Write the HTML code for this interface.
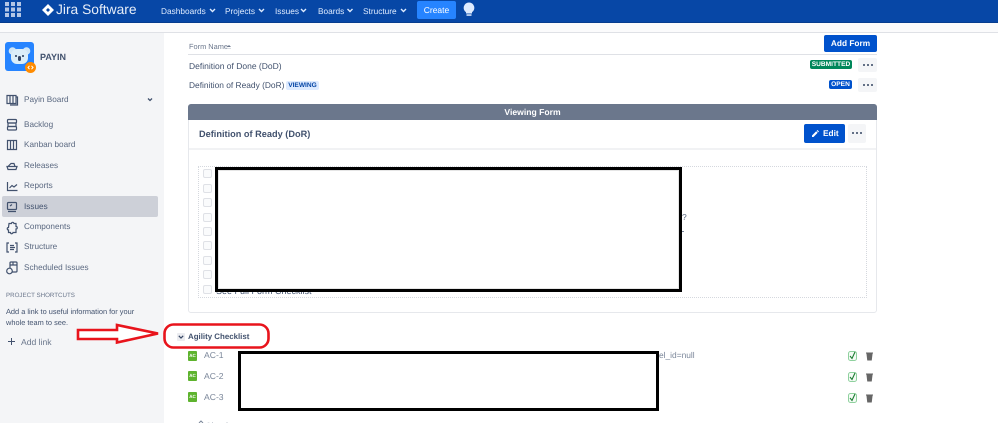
<!DOCTYPE html>
<html><head><meta charset="utf-8"><style>
html,body{margin:0;padding:0;background:#fff}
#p{position:relative;width:998px;height:423px;overflow:hidden;background:#fff;font-family:"Liberation Sans",sans-serif;color:#42526e;text-rendering:geometricPrecision;filter:blur(.3px)}
#p div,#p span.a{position:absolute;white-space:nowrap}
.t{line-height:12px;height:12px}
.n{font-size:8.300px;color:#deebff;top:5px}
.s{font-size:8.200px;color:#5a6880;left:24px}
.lz{font-weight:bold;font-size:6.600px;text-align:center;border-radius:2px;color:#fff;line-height:9px;height:9px}
.dt{background:#f4f5f7;border-radius:2px;color:#253858;text-align:center;font-weight:bold}
.d{display:inline-block;width:2px;height:2px;border-radius:50%;background:#344563;margin:0 1px;vertical-align:middle}
.cb{left:203px;width:7px;height:7px;border:1px solid #dfe1e6;border-radius:2px;background:#fafbfc}
.ac{left:188px;width:9px;height:10px;background:#5eb32e;border-radius:1px;color:#fff;font-size:4.500px;font-weight:bold;text-align:center;line-height:10px}
.act{left:204px;font-size:8.600px;color:#7a8699}
svg{position:absolute;overflow:visible}
</style></head><body><div id="p">
<div style="left:0;top:0;width:998px;height:22px;background:#0747a6"></div>
<div style="left:0;top:22px;width:998px;height:1px;background:#063d8f"></div>
<div style="left:0;top:23px;width:998px;height:9px;background:#fbfbfc"></div>
<div style="left:0;top:32px;width:998px;height:1px;background:#dfe1e6"></div>
<div style="left:0;top:33px;width:164px;height:390px;background:#f4f5f7"></div>

<svg style="left:5px;top:2px" width="16" height="15" fill="#b3c6e6"><rect width="4" height="4"/><rect x="6" width="4" height="4"/><rect x="12" width="4" height="4"/><rect y="5.500" width="4" height="4"/><rect x="6" y="5.500" width="4" height="4"/><rect x="12" y="5.500" width="4" height="4"/><rect y="11" width="4" height="4"/><rect x="6" y="11" width="4" height="4"/><rect x="12" y="11" width="4" height="4"/></svg>
<svg style="left:42px;top:4px" width="12" height="12"><path d="M6 0L12 6L6 12L0 6Z" fill="#fff"/><path d="M6 4L8 6L6 8L4 6Z" fill="#0747a6"/></svg>
<div class="t" style="left:56px;top:2px;height:16px;line-height:16px;font-size:13.800px;color:#e6edf8">Jira Software</div>
<div class="t n" style="left:161px">Dashboards</div>
<div class="t n" style="left:225px">Projects</div>
<div class="t n" style="left:275px">Issues</div>
<div class="t n" style="left:318px">Boards</div>
<div class="t n" style="left:363px">Structure</div>
<svg style="left:0;top:0" width="420" height="22" fill="none" stroke="#deebff" stroke-width="1.400"><path d="M210 9l2.500 2.500L215 9M259 9l2.500 2.500L264 9M301 9l2.500 2.500L306 9M347.500 9l2.500 2.500L352.500 9M401 9l2.500 2.500L406 9"/></svg>
<div style="left:417px;top:1px;width:39px;height:18px;background:#2684ff;border-radius:2px;color:#fff;font-size:8.500px;text-align:center;line-height:19px">Create</div>
<svg style="left:463px;top:2px" width="12" height="15"><path d="M6 0.500a5.300 5.300 0 0 1 3 9.700V11.500H3V10.200A5.300 5.300 0 0 1 6 .5Z" fill="#deebff"/><rect x="3.500" y="12.300" width="5" height="1.500" fill="#deebff"/></svg>

<div style="left:5px;top:42px;width:29px;height:29px;background:#2684ff;border-radius:3px"></div>
<svg style="left:8px;top:46px" width="24" height="21"><circle cx="4.500" cy="5" r="3.800" fill="#cfe6f7"/><circle cx="18.500" cy="5" r="3.800" fill="#cfe6f7"/><rect x="3" y="3" width="17" height="15" rx="6" fill="#dceef9"/><circle cx="8" cy="10" r="1" fill="#253858"/><circle cx="15" cy="10" r="1" fill="#253858"/><rect x="10" y="10" width="3" height="5" rx="1.500" fill="#344563"/></svg>
<div style="left:25px;top:62px;width:11px;height:11px;background:#ff8b00;border-radius:50%"></div>
<svg style="left:25px;top:62px" width="11" height="11" fill="none" stroke="#fff" stroke-width="1"><path d="M4.500 3.800L3 5.500l1.500 1.700M6.500 3.800L8 5.500 6.500 7.200"/></svg>
<div class="t" style="left:40px;top:51px;font-size:9px;font-weight:bold;color:#42526e">PAYIN</div>

<div style="left:2px;top:196px;width:156px;height:20.500px;background:#cdd0d8;border-radius:2px"></div>
<div class="t s" style="top:94px">Payin Board</div>
<div class="t s" style="top:119px">Backlog</div>
<div class="t s" style="top:139px">Kanban board</div>
<div class="t s" style="top:160px">Releases</div>
<div class="t s" style="top:180px">Reports</div>
<div class="t s" style="top:201px;color:#42526e">Issues</div>
<div class="t s" style="top:221px">Components</div>
<div class="t s" style="top:241px">Structure</div>
<div class="t s" style="top:262px">Scheduled Issues</div>
<svg style="left:0;top:90px" width="164" height="190" fill="none" stroke="#42526e" stroke-width="1.200">
<path d="M7 5.500h9v8H7zM10 5.500v8M13 5.500v8M16 7h1.500v8H10"/>
<path d="M148 8.500l2 2 2-2" stroke-width="1.300"/>
<rect x="7.500" y="29.500" width="9" height="3.500" rx="1"/><rect x="8" y="33" width="8" height="3.500"/><rect x="7.500" y="36.500" width="9" height="3.500" rx="1"/>
<path d="M7.500 50.500h9v9h-9zM10.500 50.500v9M13.500 50.500v9"/>
<path d="M8 76.500l3-3h3l1 3M7 76.500h10l-1 3H8z"/>
<path d="M7.500 92v8.500h10M9.500 98l2.500-2.500 2 1.500 3-2.500"/>
<rect x="7.500" y="112.500" width="9" height="7" rx="1"/><path d="M8 121.500h8M10 116l2-1.500" />
<path d="M9 133h2.500a1.200 1.200 0 0 1 2.400 0H16v3a1.200 1.200 0 0 1 0 2.500V142h-3a1.200 1.200 0 0 1-2.500 0H8.500v-2.500a1.200 1.200 0 0 1 0-2.500z" transform="translate(0,.5)"/>
<path d="M9 153H7v9h2M15 153h2v9h-2M10 155.500h4M10 157.500h5M10 159.500h4"/>
<rect x="10" y="172" width="7" height="10" rx="1"/><path d="M10.500 175h6M13 172v3"/><circle cx="9.500" cy="181" r="2.800" fill="#f4f5f7"/>
</svg>

<div class="t" style="left:6px;top:290px;font-size:6.200px;color:#6b778c">PROJECT SHORTCUTS</div>
<div class="t" style="left:6px;top:306px;font-size:7.400px;color:#42526e">Add a link to useful information for your</div>
<div class="t" style="left:6px;top:317px;font-size:7.400px;color:#42526e">whole team to see.</div>
<svg style="left:7px;top:337px" width="9" height="9" stroke="#42526e" stroke-width="1"><path d="M4.500 1v7M1 4.500h7"/></svg>
<div class="t" style="left:21px;top:336px;font-size:8.600px;color:#6b778c">Add link</div>

<div class="t" style="left:189px;top:41px;font-size:7.400px;color:#6b778c">Form Name</div>
<svg style="left:227px;top:45px" width="4" height="4" fill="#6b778c"><path d="M0 2L2 0 4 2z"/><path d="M0 3h4v.6H0z" fill="#c1c7d0"/></svg>
<div style="left:188px;top:54px;width:689px;height:1px;background:#dfe1e6"></div>
<div class="t" style="left:189px;top:60px;font-size:8.500px;color:#42526e">Definition of Done (DoD)</div>
<div class="t" style="left:189px;top:79px;font-size:8.400px;color:#42526e">Definition of Ready (DoR)</div>
<div class="lz" style="left:286px;top:81px;width:33px;background:#deebff;color:#0747a6">VIEWING</div>
<div style="left:824px;top:35px;width:53px;height:17px;background:#0052cc;border-radius:2px;color:#fff;font-size:8.300px;font-weight:bold;text-align:center;line-height:17px">Add Form</div>
<div class="lz" style="left:810px;top:60px;width:42px;background:#00875a">SUBMITTED</div>
<div class="dt" style="left:858px;top:58px;width:19px;height:14px;line-height:13px"><i class="d"></i><i class="d"></i><i class="d"></i></div>
<div class="lz" style="left:829px;top:80px;width:23px;background:#0052cc">OPEN</div>
<div class="dt" style="left:858px;top:78px;width:19px;height:14px;line-height:13px"><i class="d"></i><i class="d"></i><i class="d"></i></div>

<div style="left:188px;top:104px;width:689px;height:209px;box-sizing:border-box;border:1px solid #e6e8ec;border-radius:3px"></div>
<div style="left:188px;top:104px;width:689px;height:15.500px;background:#6b778c;border-radius:3px 3px 0 0;color:#fff;font-size:8.600px;font-weight:bold;text-align:center;line-height:16px">Viewing Form</div>
<div class="t" style="left:199px;top:127.500px;font-size:9.200px;font-weight:bold;color:#42526e">Definition of Ready (DoR)</div>
<div style="left:189px;top:148px;width:687px;height:2px;background:#f1f2f4"></div>
<div style="left:804px;top:124px;width:41px;height:19px;background:#0052cc;border-radius:2px;color:#fff;font-size:8.300px;font-weight:bold;line-height:19px;text-indent:19px">Edit</div>
<svg style="left:812px;top:130px" width="7" height="7" fill="#fff"><path d="M0 7V5.500L4.200 1.300l1.500 1.500L1.500 7zM4.700.8L5.500 0 7 1.500l-.8.8z"/></svg>
<div class="dt" style="left:848px;top:124px;width:18px;height:19px;line-height:18px"><i class="d"></i><i class="d"></i><i class="d"></i></div>
<div style="left:198px;top:166px;width:669px;height:132px;box-sizing:border-box;border:1px dotted #d5d8de"></div>
<div class="cb" style="top:169px"></div><div class="cb" style="top:184px"></div><div class="cb" style="top:198px"></div>
<div class="cb" style="top:213px"></div><div class="cb" style="top:227px"></div><div class="cb" style="top:241px"></div>
<div class="cb" style="top:256px"></div><div class="cb" style="top:270px"></div><div class="cb" style="top:285px"></div>
<div class="t" style="left:216px;top:285px;font-size:9px;color:#42526e">See Full Form Checklist</div>
<div class="t" style="left:682px;top:211px;font-size:8.500px;color:#5a6880">?</div>
<div style="left:682px;top:231px;width:2px;height:1px;background:#7a8699"></div>
<div style="left:215px;top:167px;width:467px;height:125px;box-sizing:border-box;border:3px solid #000;background:#fff;outline:1px solid rgba(0,0,0,.1);outline-offset:-4px"></div>

<svg style="left:0;top:0" width="998" height="423" fill="none">
<rect x="164.500" y="324.500" width="104" height="23" rx="9" stroke="#e8141c" stroke-width="2.600"/>
<path d="M78 330H117V325L158 333.500 117 342.500V339H78Z" stroke="#e8141c" stroke-width="2.600" fill="#fff"/>
</svg>
<div style="left:177px;top:333px;width:8px;height:8px;background:#ebecf0;border-radius:1px"></div>
<svg style="left:178px;top:334px" width="6" height="6" fill="none" stroke="#344563" stroke-width="1.200"><path d="M.8 1.800L3 4 5.200 1.800"/></svg>
<div class="t" style="left:188px;top:331px;font-size:7.900px;font-weight:bold;color:#42526e">Agility Checklist</div>
<div class="ac" style="top:351px">AC</div><div class="ac" style="top:371px">AC</div><div class="ac" style="top:392px">AC</div>
<div class="t act" style="top:349px">AC-1</div><div class="t act" style="top:370px">AC-2</div><div class="t act" style="top:391px">AC-3</div>
<div style="left:238px;top:351px;width:421px;height:60px;box-sizing:border-box;border:3px solid #000;background:#fff"></div>
<div class="t" style="left:659px;top:349px;font-size:8.400px;color:#7a8699">el_id=null</div>
<svg style="left:848px;top:351px" width="26" height="52" fill="none">
<g id="r"><rect x=".5" y=".5" width="8" height="9" rx="2" stroke="#8fd19e" fill="#f4fbf5"/><path d="M2 5l2 2.500L7 1" stroke="#1c7c32" stroke-width="1.100"/>
<path d="M18 2h7M19 3l.7 6h3.600l.7-6z" fill="#666" stroke="#666"/></g>
<use href="#r" y="21"/><use href="#r" y="42"/>
</svg>
<div class="t" style="left:205px;top:420px;font-size:9px;color:#7a8699">Checks</div>
<svg style="left:198px;top:420px" width="6" height="3" stroke="#7a8699"><path d="M1 3L3 1 5 3" fill="none"/></svg>
</div></body></html>
